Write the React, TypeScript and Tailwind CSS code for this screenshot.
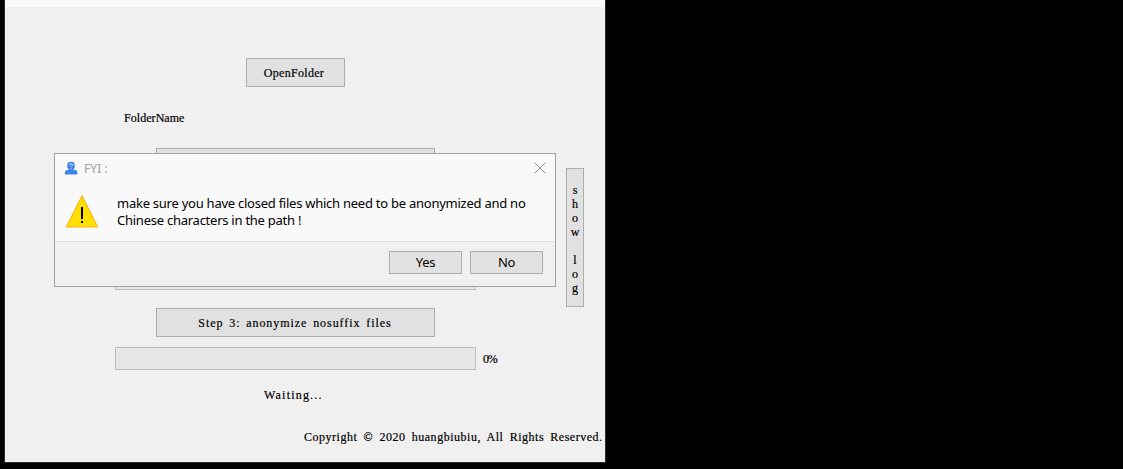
import type { ReactNode } from "react";

function Btn({ children, className = "" }: { children?: ReactNode; className?: string }) {
  return (
    <button
      className={`flex items-center justify-center whitespace-pre border border-[#adadad] bg-[#e1e1e1] ${className}`}
    >
      {children}
    </button>
  );
}

function Progress({ label }: { label?: string }) {
  return (
    <div className="mt-2.5 ml-[110px] flex h-[23px] items-center gap-[7px]">
      <div className="h-full w-[361px] border border-[#bcbcbc] bg-[#e6e6e6]" />
      {label && <span className="pt-px tracking-[-1.3px]">{label}</span>}
    </div>
  );
}

function UserIcon() {
  return (
    <svg width="14" height="14" viewBox="0 0 14 14">
      <path d="M3.3 4Q3.3.8 7 .8T10.7 4v2.5L9.3 9h2.2q2 .4 2 4.5H.8q0-4.1 2-4.5H5L3.3 6.5z" fill="#3f83ea" />
      <path d="M5.4 4C5.7 2.2 8.6 2.4 8.6 4c0 1-1.5 1.1-1.5 2M7.1 7v1" fill="none" stroke="#d9e8ff" strokeWidth="1" />
    </svg>
  );
}

function WarningIcon() {
  return (
    <svg width="34" height="34" viewBox="0 0 34 34">
      <path d="M17 1 32.5 31.8H1.5z" fill="#ffe000" stroke="#fdb813" strokeWidth="1.3" />
      <path d="M16 12h2v12h-2zM16 26h2v2h-2z" fill="#000" />
    </svg>
  );
}

function Dialog() {
  return (
    <div className="absolute top-[153px] left-[54px] flex h-[134px] w-[502px] flex-col border border-[#a0a0a0] bg-[#f9f9f9] font-['Noto_Sans',sans-serif] text-[13px] tracking-[-0.25px] [-webkit-text-stroke:0px]">
      <div className="flex h-[28px] items-center pr-[9px] pl-[9px]">
        <UserIcon />
        <span className="ml-1.5 grow pt-0.5 text-[12px] tracking-[0.1px] text-[#a0a0a0]">FYI :</span>
        <svg width="12" height="12" viewBox="0 0 12 12" stroke="#8c8c8c" strokeWidth="1">
          <path d="M.7.7l10.6 10.6M11.3.7.7 11.3" />
        </svg>
      </div>
      <div className="flex grow pt-[13px] pl-2.5">
        <WarningIcon />
        <p className="ml-[18px] whitespace-nowrap leading-[17px]">
          make sure you have closed files which need to be anonymized and no
          <br />
          Chinese characters in the path !
        </p>
      </div>
      <div className="flex h-[45px] justify-end gap-2 border-t border-[#dfdfdf] bg-[#f0f0f0] pt-[9px] pr-3">
        <Btn className="h-[23px] w-[73px] pb-px">Yes</Btn>
        <Btn className="h-[23px] w-[73px] pb-px">No</Btn>
      </div>
    </div>
  );
}

export default function App() {
  return (
    <div className="relative h-[469px] w-[1123px] overflow-hidden bg-black pl-1 font-['Liberation_Serif',serif] text-[12px] leading-[14px] text-black [-webkit-text-stroke:0.2px]">
      <div className="flex h-[463px] w-[602px] flex-col border border-t-0 border-[#2c2c2c] bg-[#f0f0f0]">
        <div className="h-[7px] shrink-0 bg-[#f9f9f9]" />
        <div className="flex grow">
          <div className="flex w-[561px] shrink-0 flex-col">
            <Btn className="mt-[51px] ml-[241px] h-[29px] w-[99px] pr-[3px] tracking-[0.3px]">OpenFolder</Btn>
            <span className="mt-6 ml-[119px] h-[14px] tracking-[0.05px]">FolderName</span>
            <Btn className="mt-[23px] ml-[151px] h-[29px] w-[279px]" />
            <Progress />
            <Btn className="mt-[18px] ml-[151px] h-[29px] w-[279px]" />
            <Progress />
            <Btn className="mt-[18px] ml-[151px] h-[29px] w-[279px] pr-px tracking-[0.95px] [word-spacing:1.8px]">
              Step 3: anonymize nosuffix files
            </Btn>
            <Progress label="0%" />
            <span className="mt-[18px] ml-[259px] tracking-[1.2px]">Waiting...</span>
            <span className="mt-7 ml-[299px] whitespace-nowrap tracking-[0.52px] [word-spacing:2.7px]">
              Copyright © 2020 huangbiubiu, All Rights Reserved.
            </span>
          </div>
          <Btn className="mt-[161px] h-[139px] w-[18px] pt-[3px] leading-[14.1px]">{"s\nh\no\nw\n\nl\no\ng"}</Btn>
        </div>
      </div>
      <Dialog />
    </div>
  );
}
